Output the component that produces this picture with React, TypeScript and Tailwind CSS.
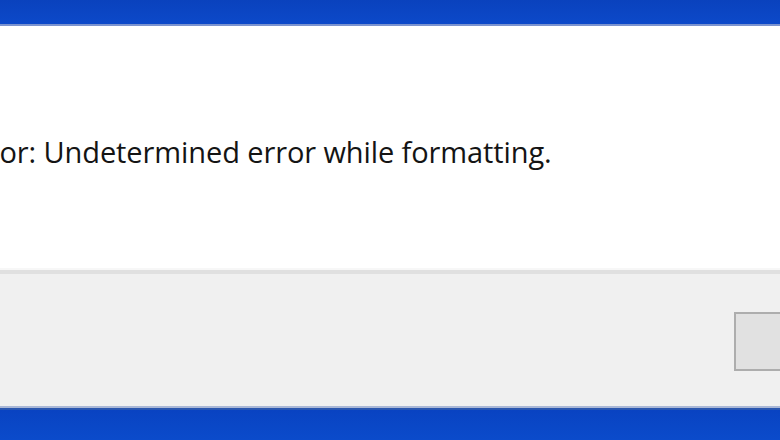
import React from "react";

const App: React.FC = () => {
  return (
    <div className="w-[780px] h-[440px] overflow-hidden flex flex-col bg-[#0b47c6]">
      {/* Desktop strip above the dialog */}
      <div className="h-[24px] shrink-0 bg-gradient-to-b from-[#0a42bd] to-[#0c49c9]" />
      <div className="h-[2px] shrink-0 bg-[#7b93cf]" />

      {/* Dialog body */}
      <div className="h-[242px] shrink-0 bg-white flex items-start overflow-hidden">
        <p
          className="mt-[106px] ml-[-40px] whitespace-nowrap text-[29px] leading-[40px] text-[#141414] tracking-[-0.1px]"
          style={{ fontFamily: '"Open Sans", "Noto Sans", sans-serif' }}
        >
          Error: Undetermined error while formatting.
        </p>
      </div>

      {/* Button row */}
      <div className="h-[2px] shrink-0 bg-[#f7f7f7]" />
      <div className="h-[4px] shrink-0 bg-[#e0e0e0]" />
      <div className="h-[132px] shrink-0 bg-[#f0f0f0] flex items-start justify-end overflow-hidden">
        <button className="mt-[38px] mr-[-20px] w-[66px] h-[59px] border-2 border-[#adadad] bg-[#e1e1e1]" />
      </div>
      <div className="h-[2px] shrink-0 bg-[#a9b7d6]" />
      <div className="h-[2px] shrink-0 bg-[#2a56b0]" />
      <div className="flex-1 bg-gradient-to-b from-[#0943c2] to-[#0b4bcb]" />
    </div>
  );
};

export default App;
